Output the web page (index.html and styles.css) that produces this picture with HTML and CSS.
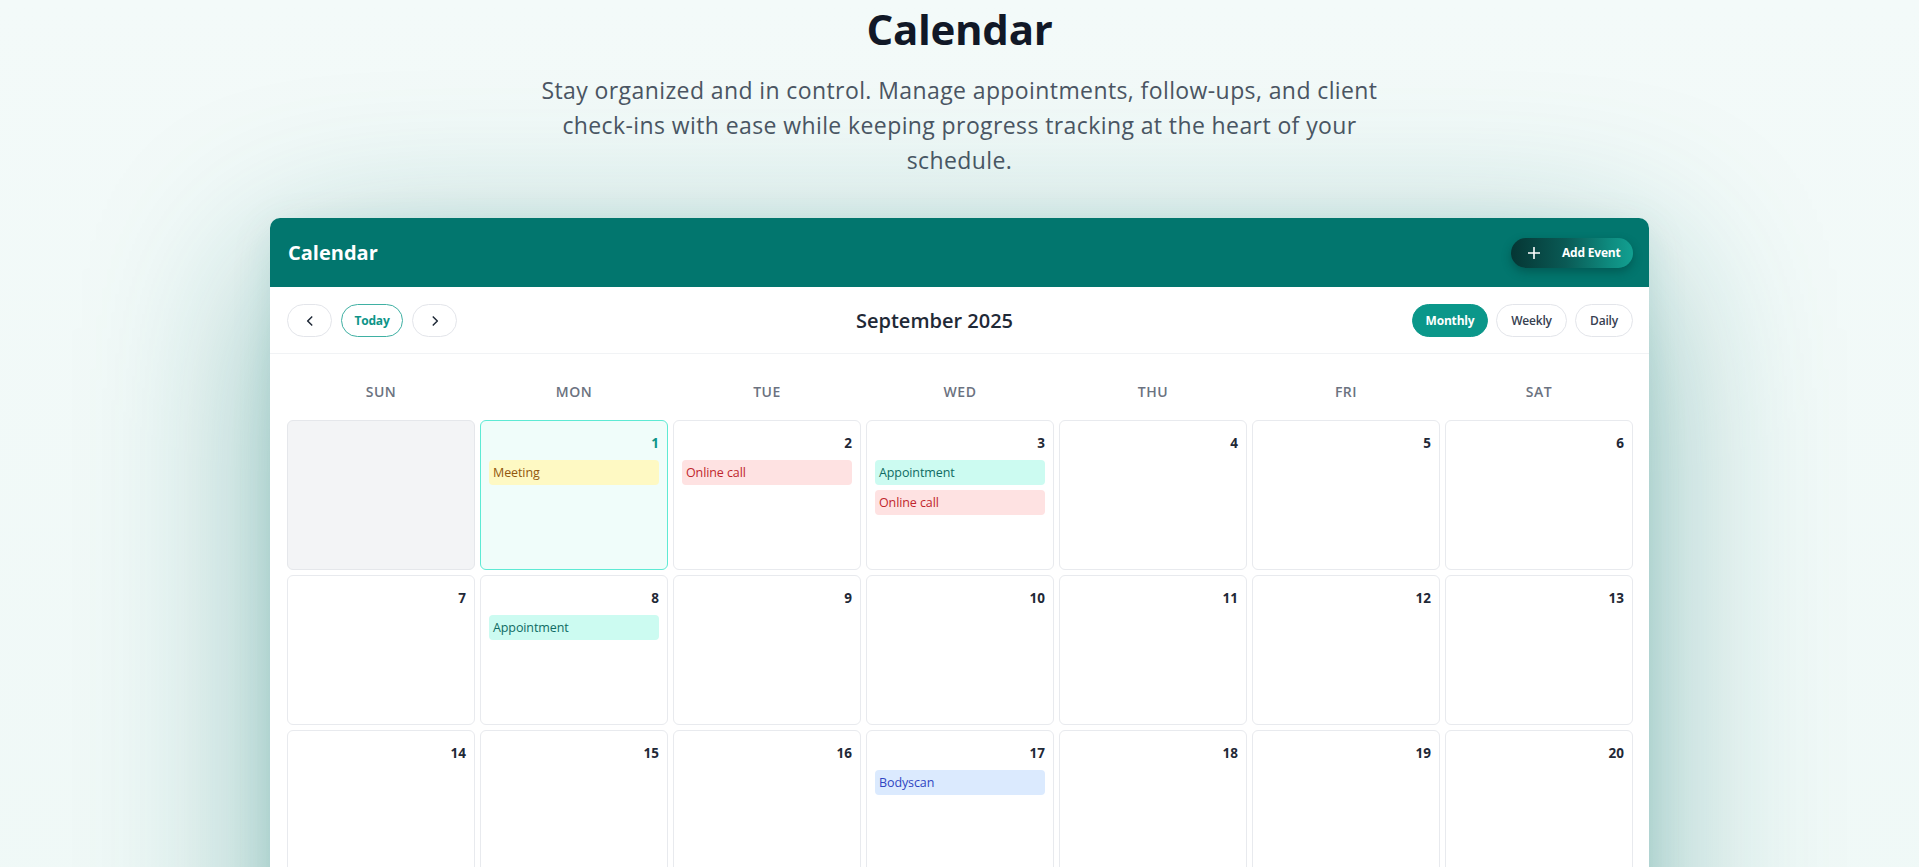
FILE: index.html
```html
<!DOCTYPE html>
<html lang="en">
<head>
<meta charset="utf-8">
<title>Calendar</title>
<link rel="stylesheet" href="styles.css">
</head>
<body>
<section class="page">
  <h1 class="page-title">Calendar</h1>
  <p class="page-sub">Stay organized and in control. Manage appointments, follow-ups, and client check-ins with ease while keeping progress tracking at the heart of your schedule.</p>

  <div class="card">
    <header class="card-head">
      <h2 class="card-title">Calendar</h2>
      <button class="add-btn">
        <svg class="plus" width="12" height="12" viewBox="0 0 12 12"><path d="M6 0.5v11M0.5 6h11" stroke="#fff" stroke-width="1.6" fill="none" stroke-linecap="round"/></svg>
        <span>Add Event</span>
      </button>
    </header>

    <div class="toolbar">
      <div class="nav">
        <button class="pill icon-pill" aria-label="Previous">
          <svg width="14" height="14" viewBox="0 0 24 24"><polyline points="15 5 8 12 15 19" fill="none" stroke="#1f2937" stroke-width="2.6" stroke-linecap="round" stroke-linejoin="round"/></svg>
        </button>
        <button class="pill today">Today</button>
        <button class="pill icon-pill" aria-label="Next">
          <svg width="14" height="14" viewBox="0 0 24 24"><polyline points="9 5 16 12 9 19" fill="none" stroke="#1f2937" stroke-width="2.6" stroke-linecap="round" stroke-linejoin="round"/></svg>
        </button>
      </div>
      <div class="month">September 2025</div>
      <div class="views">
        <button class="pill view active">Monthly</button>
        <button class="pill view">Weekly</button>
        <button class="pill view">Daily</button>
      </div>
    </div>

    <div class="cal">
      <div class="weekdays">
        <div>SUN</div><div>MON</div><div>TUE</div><div>WED</div><div>THU</div><div>FRI</div><div>SAT</div>
      </div>
      <div class="grid">
        <div class="cell empty"></div>
        <div class="cell today-cell"><div class="num">1</div><div class="ev ev-yellow">Meeting</div></div>
        <div class="cell"><div class="num">2</div><div class="ev ev-red">Online call</div></div>
        <div class="cell"><div class="num">3</div><div class="ev ev-teal">Appointment</div><div class="ev ev-red">Online call</div></div>
        <div class="cell"><div class="num">4</div></div>
        <div class="cell"><div class="num">5</div></div>
        <div class="cell"><div class="num">6</div></div>

        <div class="cell"><div class="num">7</div></div>
        <div class="cell"><div class="num">8</div><div class="ev ev-teal">Appointment</div></div>
        <div class="cell"><div class="num">9</div></div>
        <div class="cell"><div class="num">10</div></div>
        <div class="cell"><div class="num">11</div></div>
        <div class="cell"><div class="num">12</div></div>
        <div class="cell"><div class="num">13</div></div>

        <div class="cell"><div class="num">14</div></div>
        <div class="cell"><div class="num">15</div></div>
        <div class="cell"><div class="num">16</div></div>
        <div class="cell"><div class="num">17</div><div class="ev ev-blue">Bodyscan</div></div>
        <div class="cell"><div class="num">18</div></div>
        <div class="cell"><div class="num">19</div></div>
        <div class="cell"><div class="num">20</div></div>

        <div class="cell"><div class="num">21</div></div>
        <div class="cell"><div class="num">22</div></div>
        <div class="cell"><div class="num">23</div></div>
        <div class="cell"><div class="num">24</div></div>
        <div class="cell"><div class="num">25</div></div>
        <div class="cell"><div class="num">26</div></div>
        <div class="cell"><div class="num">27</div></div>

        <div class="cell"><div class="num">28</div></div>
        <div class="cell"><div class="num">29</div></div>
        <div class="cell"><div class="num">30</div></div>
        <div class="cell empty"></div>
        <div class="cell empty"></div>
        <div class="cell empty"></div>
        <div class="cell empty"></div>
      </div>
    </div>
  </div>
</section>
</body>
</html>
```
FILE: styles.css
```css
* { box-sizing: border-box; }

html, body {
  margin: 0;
  padding: 0;
}

body {
  font-family: "Open Sans", "Noto Sans", sans-serif;
  background: linear-gradient(180deg, #f3faf9 0%, #eef8f6 100%);
  color: #111827;
  overflow: hidden;
}

.page {
  padding: 4px 0 80px;
  display: flex;
  flex-direction: column;
  align-items: center;
}

.page-title {
  margin: 0;
  font-size: 42px;
  line-height: 50px;
  font-weight: 700;
  color: #111827;
  letter-spacing: -0.3px;
}

.page-sub {
  margin: 19px 0 0;
  max-width: 860px;
  text-align: center;
  font-size: 23px;
  line-height: 35px;
  color: #4b5563;
  letter-spacing: 0.4px;
}

.card {
  margin-top: 40px;
  width: 1379px;
  background: #fff;
  border-radius: 10px;
  overflow: hidden;
  box-shadow: 0 50px 180px rgba(15, 118, 110, 0.45), 0 10px 40px rgba(15, 118, 110, 0.12);
}

.card-head {
  height: 69px;
  background: #02766e;
  display: flex;
  align-items: center;
  justify-content: space-between;
  padding: 0 16px 0 18px;
}

.card-title {
  margin: 0;
  color: #fff;
  font-size: 20px;
  font-weight: 700;
}

.add-btn {
  height: 30px;
  width: 122px;
  border: none;
  border-radius: 15px;
  display: flex;
  align-items: center;
  padding: 0 0 0 17px;
  gap: 22px;
  color: #fff;
  font-family: inherit;
  font-weight: 700;
  font-size: 12px;
  letter-spacing: -0.2px;
  background: linear-gradient(90deg, #053634 0%, #0a5a55 45%, #0e8a7e 80%, #12a091 100%);
  box-shadow: 0 4px 10px rgba(0, 40, 38, 0.35);
}

.plus { flex: none; }

.toolbar {
  display: flex;
  align-items: center;
  justify-content: space-between;
  padding: 17px 16px 16px 17px;
  border-bottom: 1px solid #f1f3f5;
}

.nav, .views {
  display: flex;
  gap: 9px;
}

.views { gap: 8px; }

.pill {
  height: 33px;
  border-radius: 17px;
  border: 1.5px solid #e3e5ea;
  background: #fff;
  font-family: inherit;
  font-size: 12px;
  font-weight: 600;
  color: #374151;
  padding: 0 14px;
  display: flex;
  align-items: center;
  justify-content: center;
  letter-spacing: -0.2px;
}

.icon-pill {
  width: 45px;
  padding: 0;
}

.today {
  width: 62px;
  padding: 0;
  border-color: #3fb0a3;
  color: #0d9488;
  font-weight: 700;
}

.view.active {
  background: #0b978a;
  border-color: #0b978a;
  color: #fff;
  font-weight: 700;
}

.views .view:nth-child(1) { width: 76px; }
.views .view:nth-child(2) { width: 71px; }
.views .view:nth-child(3) { width: 58px; }

.month {
  font-size: 20px;
  font-weight: 600;
  color: #1f2937;
  letter-spacing: 0;
}

.cal {
  padding: 17px 16px 17px 17px;
}

.weekdays {
  display: grid;
  grid-template-columns: repeat(7, 1fr);
  gap: 5px;
  padding: 11px 0 18px;
  text-align: center;
  font-size: 14px;
  line-height: 20px;
  font-weight: 600;
  color: #6b7280;
  letter-spacing: 0.5px;
}

.grid {
  display: grid;
  grid-template-columns: repeat(7, 1fr);
  grid-auto-rows: 150px;
  gap: 5px;
}

.cell {
  border: 1px solid #e8eaee;
  border-radius: 6px;
  background: #fff;
  padding: 12px 8px 8px;
  display: flex;
  flex-direction: column;
  gap: 5px;
}

.cell.empty {
  background: #f3f4f6;
  border-color: #e5e7eb;
}

.cell.today-cell {
  background: #f0fdfa;
  border-color: #5eead4;
}

.num {
  text-align: right;
  font-size: 13.5px;
  line-height: 20px;
  font-weight: 700;
  color: #1f2937;
  margin-bottom: 2px;
}

.today-cell .num { color: #0d9488; }

.ev {
  height: 25px;
  line-height: 25px;
  border-radius: 4px;
  padding: 0 4px;
  font-size: 12.5px;
  letter-spacing: -0.1px;
  white-space: nowrap;
  overflow: hidden;
}

.ev-yellow { background: #fef9c3; color: #92580e; }
.ev-red { background: #fee2e2; color: #c0262d; }
.ev-teal { background: #ccfbf1; color: #0f6b63; }
.ev-blue { background: #dbeafe; color: #2f45c2; }
```
